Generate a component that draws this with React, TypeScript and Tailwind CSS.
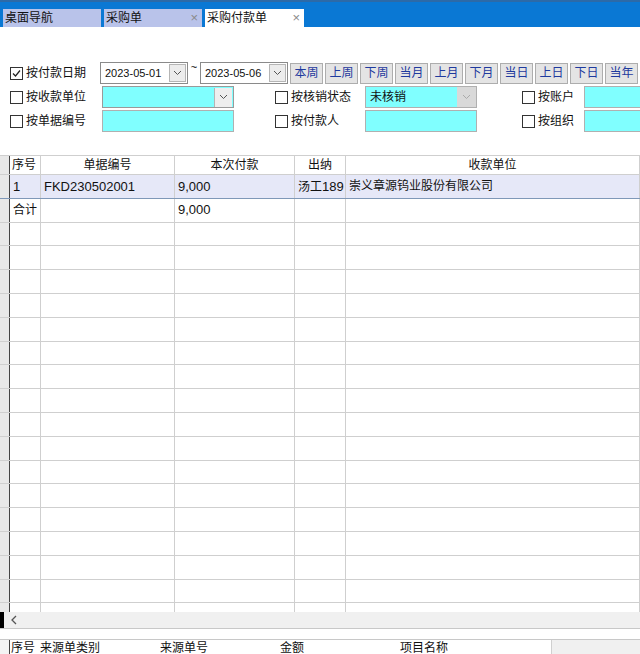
import React from "react";

const FONT = { fontFamily: '"Liberation Sans", "Noto Sans CJK SC", sans-serif' };

const Check = ({ checked = false }: { checked?: boolean }) => (
  <span className="inline-flex w-[13px] h-[13px] border border-[#333] bg-white items-center justify-center shrink-0">
    {checked && (
      <svg width="11" height="11" viewBox="0 0 11 11">
        <path d="M2 5.5 L4.5 8 L9 2.5" fill="none" stroke="#222" strokeWidth="1.2" />
      </svg>
    )}
  </span>
);

const Chevron = ({ color = "#555" }: { color?: string }) => (
  <svg width="9" height="6" viewBox="0 0 9 6">
    <path d="M1 1 L4.5 4.5 L8 1" fill="none" stroke={color} strokeWidth="1" />
  </svg>
);

const DateBox = ({ value, w }: { value: string; w: string }) => (
  <div className={`flex h-[22px] ${w} shrink-0 border border-[#8a8a8a] bg-white items-center`}>
    <span className="flex-1 pl-[4px] text-[11px] text-[#111] whitespace-nowrap">{value}</span>
    <span className="w-[17px] h-[18px] mr-[1px] shrink-0 border border-[#b5b5b5] bg-[#ececec] flex items-center justify-center">
      <Chevron />
    </span>
  </div>
);

// last button is cut off by the window edge
const quick = ["本周", "上周", "下周", "当月", "上月", "下月", "当日", "上日", "下日", "当年", ""];

const Label = ({ text, checked, w }: { text: string; checked?: boolean; w: string }) => (
  <div className={`flex items-center gap-[3px] shrink-0 ${w}`}>
    <Check checked={checked} />
    <span className="text-[12px] text-[#111] whitespace-nowrap">{text}</span>
  </div>
);

const cols = [
  { w: "w-[31px]", title: "序号", align: "text-left pl-[2px]" },
  { w: "w-[134px]", title: "单据编号", align: "text-center" },
  { w: "w-[120px]", title: "本次付款", align: "text-center" },
  { w: "w-[51px]", title: "出纳", align: "text-center" },
  { w: "flex-1", title: "收款单位", align: "text-center" },
];

const Row = ({ cells, selected }: { cells: React.ReactNode[]; selected?: boolean }) => (
  <div
    className={`flex h-[23.8px] shrink-0 border-b ${
      selected ? "bg-[#e6e8f8] border-[#7f98b8]" : "border-[#cfcfcf]"
    }`}
  >
    <div className="w-[10px] bg-[#e8e8e8] border-r border-[#444] shrink-0" />
    {cols.map((c, i) => (
      <div
        key={i}
        className={`${c.w} shrink-0 border-r border-[#cfcfcf] flex items-center overflow-hidden whitespace-nowrap pl-[3px] text-[#111]`}
      >
        {cells[i]}
      </div>
    ))}
  </div>
);

const Spacer = ({ w }: { w: string }) => <div className={`${w} shrink-0`} />;

export default function App() {
  return (
    <div className="w-[640px] h-[654px] bg-white overflow-hidden relative" style={FONT}>
      {/* tab strip */}
      <div className="h-[27px] bg-[#0a78d4] border-t-2 border-[#2c6aa8] flex items-end pl-[3px] gap-[3px]">
        <div className="w-[98px] h-[18px] bg-[#b9c3ea] text-[12px] text-[#111] pl-[2px] leading-[18px]">桌面导航</div>
        <div className="w-[98px] h-[18px] bg-[#b9c3ea] text-[12px] text-[#111] pl-[2px] leading-[18px] flex justify-between pr-[4px]">
          <span>采购单</span>
          <span className="text-[#8a8a8a] text-[13px]">×</span>
        </div>
        <div className="w-[99px] h-[18px] bg-white text-[12px] text-[#111] pl-[2px] leading-[18px] flex justify-between pr-[4px]">
          <span>采购付款单</span>
          <span className="text-[#8a8a8a] text-[13px]">×</span>
        </div>
      </div>

      {/* filters */}
      <div className="pt-[35px] pl-[10px] flex flex-col gap-[2px] w-[640px] overflow-hidden">
        <div className="flex items-center h-[22px]">
          <Label text="按付款日期" checked w="w-[90px]" />
          <DateBox value="2023-05-01" w="w-[88px]" />
          <span className="w-[12px] shrink-0 text-center text-[11px] self-start -mt-[3px]">~</span>
          <DateBox value="2023-05-06" w="w-[88px]" />
          <div className="flex gap-[2px] ml-[2px] shrink-0">
            {quick.map((q, i) => (
              <span
                key={i}
                className="w-[33px] h-[21px] shrink-0 border border-[#adadad] bg-[#e4e4e4] text-[12px] text-[#1f3a9e] flex items-center justify-center"
              >
                {q}
              </span>
            ))}
          </div>
        </div>
        <div className="flex items-center h-[22px]">
          <Label text="按收款单位" w="w-[92px]" />
          <div className="w-[132px] h-[22px] shrink-0 border border-[#9a9a9a] bg-[#80ffff] flex justify-end items-center">
            <span className="w-[18px] h-[19px] border-l border-[#b5b5b5] bg-[#eeeeee] flex items-center justify-center mr-[1px]">
              <Chevron />
            </span>
          </div>
          <Spacer w="w-[41px]" />
          <Label text="按核销状态" w="w-[90px]" />
          <div className="w-[112px] h-[22px] shrink-0 border border-[#b0b0b0] bg-[#80ffff] flex items-center">
            <span className="flex-1 pl-[4px] text-[12px] text-[#111]">未核销</span>
            <span className="w-[19px] h-[20px] bg-[#d9d9d9] flex items-center justify-center">
              <Chevron color="#aaa" />
            </span>
          </div>
          <Spacer w="w-[45px]" />
          <Label text="按账户" w="w-[62px]" />
          <div className="w-[60px] h-[22px] shrink-0 border border-[#b0b0b0] bg-[#80ffff]" />
        </div>
        <div className="flex items-center h-[22px]">
          <Label text="按单据编号" w="w-[92px]" />
          <div className="w-[132px] h-[22px] shrink-0 border border-[#b0b0b0] bg-[#80ffff]" />
          <Spacer w="w-[41px]" />
          <Label text="按付款人" w="w-[90px]" />
          <div className="w-[112px] h-[22px] shrink-0 border border-[#b0b0b0] bg-[#80ffff]" />
          <Spacer w="w-[45px]" />
          <Label text="按组织" w="w-[62px]" />
          <div className="w-[60px] h-[22px] shrink-0 border border-[#b0b0b0] bg-[#80ffff]" />
        </div>
      </div>

      {/* grid */}
      <div className="mt-[23px] h-[457px] border-t border-[#cfcfcf] overflow-hidden flex flex-col">
        <div className="flex h-[19px] shrink-0 border-b border-[#cfcfcf] text-[12px]">
          <div className="w-[10px] bg-[#e8e8e8] border-r border-[#444] shrink-0" />
          {cols.map((c, i) => (
            <div key={i} className={`${c.w} shrink-0 border-r border-[#cfcfcf] leading-[18px] text-[#111] ${c.align}`}>
              {c.title}
            </div>
          ))}
        </div>
        <Row
          selected
          cells={[
            <span className="text-[13px]">1</span>,
            <span className="text-[13px]">FKD230502001</span>,
            <span className="text-[13px]">9,000</span>,
            <span className="text-[12px]">汤工<span className="text-[13px]">189</span></span>,
            <span className="text-[12px]">崇义章源钨业股份有限公司</span>,
          ]}
        />
        <Row
          cells={[
            <span className="text-[12px]">合计</span>,
            "",
            <span className="text-[13px]">9,000</span>,
            "",
            "",
          ]}
        />
        {Array.from({ length: 17 }).map((_, i) => (
          <Row key={i} cells={["", "", "", "", ""]} />
        ))}
      </div>

      {/* horizontal scrollbar */}
      <div className="h-[17px] bg-[#f0f0f0] border-b border-[#c8c8c8] flex items-center">
        <span className="w-[4px] h-[16px] bg-black" />
        <span className="ml-[6px]">
          <svg width="8" height="10" viewBox="0 0 8 10">
            <path d="M6 1 L2 5 L6 9" fill="none" stroke="#555" strokeWidth="1.3" />
          </svg>
        </span>
      </div>

      {/* detail grid header */}
      <div className="mt-[10px] border-t border-[#c8c8c8] flex h-[16px]">
        <div className="w-[10px] bg-[#f4f4f4] border-r border-[#444] shrink-0" />
        <div className="w-[541px] flex text-[12px] text-[#111] leading-[16px] pl-[1px]">
          <span className="w-[29px]">序号</span>
          <span className="w-[120px]">来源单类别</span>
          <span className="w-[120px]">来源单号</span>
          <span className="w-[120px]">金额</span>
          <span>项目名称</span>
        </div>
        <div className="flex-1 bg-[#f0f0f0] border-l border-[#d0d0d0]" />
      </div>
    </div>
  );
}
